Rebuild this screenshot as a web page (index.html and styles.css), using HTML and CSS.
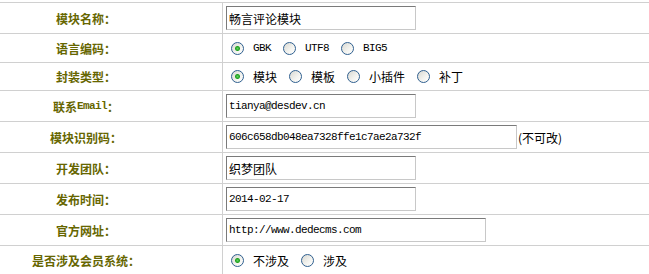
FILE: index.html
```html
<!DOCTYPE html>
<html lang="zh-CN">
<head>
    <meta charset="UTF-8">
    <title>模块信息</title>
    <link rel="stylesheet" href="styles.css">
</head>
<body>
    <div class="form">
        <div class="row">
            <div class="label">模块名称：</div>
            <div class="value"><input type="text" class="txt" value="畅言评论模块"></div>
        </div>
        <div class="row row-radio">
            <div class="label">语言编码：</div>
            <div class="value">
                <input type="radio" name="lang" checked><span class="opt mono">GBK</span>
                <input type="radio" name="lang"><span class="opt mono">UTF8</span>
                <input type="radio" name="lang"><span class="opt mono">BIG5</span>
            </div>
        </div>
        <div class="row row-radio2">
            <div class="label">封装类型：</div>
            <div class="value">
                <input type="radio" name="type" checked><span class="opt">模块</span>
                <input type="radio" name="type"><span class="opt">模板</span>
                <input type="radio" name="type"><span class="opt">小插件</span>
                <input type="radio" name="type"><span class="opt">补丁</span>
            </div>
        </div>
        <div class="row">
            <div class="label">联系<span class="mono">Email</span>：</div>
            <div class="value"><input type="text" class="txt mono" value="tianya@desdev.cn"></div>
        </div>
        <div class="row">
            <div class="label">模块识别码：</div>
            <div class="value"><input type="text" class="txt txt-long mono" value="606c658db048ea7328ffe1c7ae2a732f"><span class="note">(不可改)</span></div>
        </div>
        <div class="row">
            <div class="label">开发团队：</div>
            <div class="value"><input type="text" class="txt" value="织梦团队"></div>
        </div>
        <div class="row">
            <div class="label">发布时间：</div>
            <div class="value"><input type="text" class="txt mono" value="2014-02-17"></div>
        </div>
        <div class="row">
            <div class="label">官方网址：</div>
            <div class="value"><input type="text" class="txt txt-url mono" value="http://www.dedecms.com"></div>
        </div>
        <div class="row row-last">
            <div class="label">是否涉及会员系统：</div>
            <div class="value">
                <input type="radio" name="member" checked><span class="opt">不涉及</span>
                <input type="radio" name="member"><span class="opt">涉及</span>
            </div>
        </div>
    </div>
</body>
</html>
```

FILE: styles.css
```css
body {
    margin: 0;
    padding-top: 2px;
    background: #fff;
    font-family: "Noto Sans CJK SC", sans-serif;
    font-size: 12px;
    color: #000;
}
.form {
    width: 649px;
}
.row {
    display: flex;
    height: 31px;
    box-sizing: border-box;
    border-top: 1px solid #d0d0d0;
}
.row-radio {
    height: 29px;
}
.row-radio2 {
    height: 28px;
}
.row-last {
    height: 30px;
}
.label {
    width: 223px;
    box-sizing: border-box;
    padding-right: 50px;
    border-right: 1px solid #d0d0d0;
    display: flex;
    align-items: center;
    justify-content: center;
    font-weight: bold;
    color: #666600;
}
.value {
    flex: 1;
    display: flex;
    align-items: center;
    padding-left: 3px;
}
.mono {
    font-family: "Liberation Mono", monospace;
    font-size: 11px;
    letter-spacing: -0.6px;
}
.txt {
    width: 190px;
    height: 24px;
    box-sizing: border-box;
    margin: 0;
    padding: 0 2px;
    border: 1px solid #c8c8c8;
    border-top-color: #7a7a7a;
    border-left-color: #7a7a7a;
    font-family: "Noto Sans CJK SC", sans-serif;
    font-size: 12px;
    color: #000;
    outline: none;
}
.txt.mono {
    font-family: "Liberation Mono", monospace;
    font-size: 11px;
}
.txt-long {
    width: 291px;
}
.txt-url {
    width: 260px;
}
.note {
    margin-left: 1px;
}
input[type="radio"] {
    appearance: none;
    -webkit-appearance: none;
    width: 13px;
    height: 13px;
    margin: 0 9px 0 5px;
    border: 1px solid #2f5f8f;
    border-radius: 50%;
    box-sizing: border-box;
    background: linear-gradient(135deg, #d8d8d2, #f4f4f0 60%, #fff);
}
input[type="radio"]:checked {
    background: radial-gradient(circle, #5fd45f 0, #21a121 2px, transparent 3px),
        linear-gradient(135deg, #d8d8d2, #f4f4f0 60%, #fff);
}
.opt {
    margin-right: 7px;
}
```
